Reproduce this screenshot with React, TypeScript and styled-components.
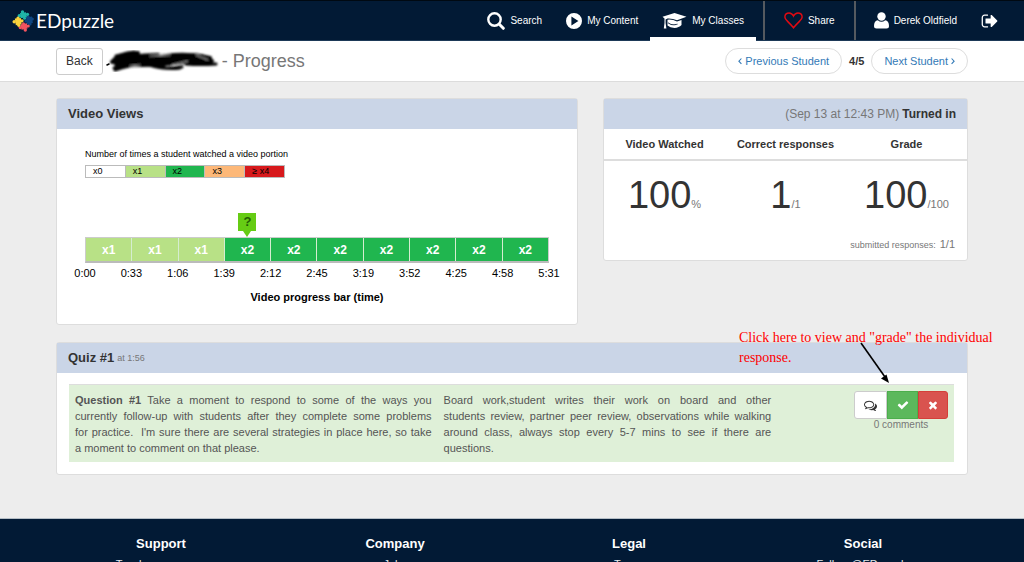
import React from 'react';
import styled, { createGlobalStyle, css } from 'styled-components';

const GlobalStyle = createGlobalStyle`
  * { box-sizing: border-box; }
  body {
    margin: 0;
    background: #ededed;
    color: #333;
    font-family: "Liberation Sans", Arial, sans-serif;
    font-size: 11px;
    line-height: 16px;
    overflow-x: hidden;
  }
  a { text-decoration: none; color: inherit; }
  button { font-family: inherit; margin: 0; cursor: pointer; }
  h1, h2, h3, p { margin: 0; }
`;

const Page = styled.div`
  height: 100vh;
  overflow: hidden;
`;

/* ---------- top bar ---------- */
const TopBar = styled.header`
  display: flex;
  align-items: stretch;
  justify-content: space-between;
  height: 41px;
  padding-left: 12px;
  background: #021a35;
  border-top: 1px solid #000912;
  border-bottom: 1px solid #1d3957;
`;

const Brand = styled.a`
  display: flex;
  align-items: center;
  gap: 2px;
  color: #fff;
  font-family: Lato, sans-serif;
  font-size: 19px;
  line-height: 20px;
`;

const Nav = styled.nav`
  display: flex;
  align-items: stretch;
`;

const NavItem = styled.a<{ $active?: boolean; $boxed?: boolean }>`
  display: flex;
  align-items: center;
  gap: 5px;
  padding: 0 12px;
  color: #fff;
  font-size: 10px;
  white-space: nowrap;
  ${(p) => p.$active && css`
    margin-right: 7px;
    box-shadow: inset 0 -3px #fff, 0 1px #fff;
  `}
  ${(p) => p.$boxed && css`
    padding: 0 19px;
    border: solid #555a60;
    border-width: 0 2px;
    margin-right: 6px;
  `}
`;

const LogOut = styled(NavItem)`
  padding: 0 25px 0 12px;
`;

/* ---------- sub header ---------- */
const SubHeader = styled.div`
  display: flex;
  align-items: center;
  justify-content: space-between;
  height: 41px;
  padding: 0 56px;
  background: #fff;
  border-bottom: 1px solid #dcdcdc;
`;

const Group = styled.div`
  display: flex;
  align-items: center;
`;

const BackButton = styled.button`
  height: 27px;
  padding: 0 9px;
  border: 1px solid #ccc;
  border-radius: 3px;
  background: #fff;
  color: #333;
  font-size: 12px;
`;

const Title = styled.h1`
  display: flex;
  align-items: center;
  gap: 2px;
  margin-left: 3px;
  color: #777;
  font-size: 18px;
  font-weight: 400;
  line-height: 24px;
`;

const PagerButton = styled.button`
  display: flex;
  align-items: center;
  gap: 3px;
  height: 26px;
  padding: 0 12px;
  border: 1px solid #ddd;
  border-radius: 13px;
  background: #fff;
  color: #337ab7;
  font-size: 11px;
`;

const PageCount = styled.strong`
  padding: 0 7px;
  font-size: 11px;
`;

/* ---------- panels ---------- */
const Content = styled.main`
  padding: 16px 56px 43px;
`;

const TopRow = styled.div`
  display: grid;
  grid-template-columns: 522fr 365fr;
  gap: 25px;
  align-items: start;
  margin-bottom: 17px;
`;

const Panel = styled.section`
  position: relative;
  background: #fff;
  border: 1px solid #ddd;
  border-radius: 3px;
`;

const PanelHead = styled.div<{ $right?: boolean }>`
  display: flex;
  align-items: center;
  justify-content: ${(p) => (p.$right ? 'flex-end' : 'flex-start')};
  gap: 3px;
  height: 30px;
  padding: 0 11px;
  background: #cad5e7;
  font-size: 12px;
  line-height: 18px;
`;

const PanelTitle = styled.h2`
  font-size: 13px;
`;

const Muted = styled.span<{ $size: number }>`
  color: #777;
  font-size: ${(p) => p.$size}px;
`;

/* ---------- video views ---------- */
const ChartBody = styled.div`
  padding: 17px 28px 19px;
  color: #000;
`;

const LegendTitle = styled.p`
  font-size: 9px;
`;

const Legend = styled.ul`
  display: flex;
  width: 200px;
  margin: 3px 0 35px;
  padding: 0;
  list-style: none;
  border: solid #bbb;
  border-width: 1px 0 1px 1px;
`;

const LegendItem = styled.li<{ $color: string }>`
  flex: 1;
  padding-left: 7px;
  border-right: 1px solid #bbb;
  background: ${(p) => p.$color};
  font-size: 9px;
  line-height: 11px;
`;

const MarkerRow = styled.div`
  display: grid;
  grid-template-columns: repeat(10, 1fr);
`;

const Marker = styled.div`
  grid-column: 4;
  justify-self: center;
  display: flex;
  flex-direction: column;
  align-items: center;
  color: #235c05;
  font-size: 13px;
  font-weight: 700;
  line-height: 18px;

  span { width: 18px; background: #66cc14; text-align: center; }
  &::after {
    content: "";
    border: solid transparent;
    border-width: 6px 4px 0;
    border-top-color: #66cc14;
  }
`;

const Bars = styled.div`
  display: flex;
  border: 1px solid #ccc;
  border-bottom: 2px solid #bbb;
`;

const Bar = styled.div<{ $color: string }>`
  flex: 1;
  padding-top: 1px;
  background: ${(p) => p.$color};
  color: #fff;
  font-size: 12px;
  font-weight: 700;
  line-height: 22px;
  text-align: center;
  & + & { border-left: 1px solid #d5edd0; }
`;

const Ticks = styled.div`
  display: grid;
  grid-template-columns: repeat(11, 1fr);
  margin: 2px -5% 8px;
  text-align: center;
`;

const AxisTitle = styled.h3`
  font-size: 11px;
  text-align: center;
`;

/* ---------- scores ---------- */
const Scores = styled.table`
  width: 100%;
  border-collapse: collapse;
  table-layout: fixed;
  text-align: center;

  th { height: 31px; padding: 0; border-bottom: 2px solid #ddd; font-size: 11px; }
  td { height: 70px; padding: 8px 0 0; font-size: 38px; line-height: 40px; white-space: nowrap; }
`;

const Submitted = styled.p`
  display: flex;
  justify-content: flex-end;
  align-items: baseline;
  gap: 4px;
  padding: 6px 12px 7px;
`;

/* ---------- quiz ---------- */
const Answer = styled.div`
  display: grid;
  grid-template-columns: 369fr 340fr 177fr;
  margin: 11px 13px 12px 12px;
  background: #dff0d8;
  border-top: 1px solid #ddd;
  color: #555;
`;

const Cell = styled.div`
  padding: 7px 6px 6px;
  text-align: justify;
`;

const Line = styled.span`
  display: block;
  white-space: pre-wrap;
  text-align-last: justify;
  &:last-child { text-align-last: left; }
`;

const Actions = styled.div`
  justify-self: end;
  padding: 6px;
  color: #777;
  font-size: 10px;
  line-height: 12px;
  text-align: center;
`;

const ButtonGroup = styled.div`
  display: flex;
`;

const tones = {
  plain: css`background: #fff; border-color: #ccc; color: #333; width: 33px; border-radius: 3px 0 0 3px;`,
  good: css`background: #5cb85c; border-color: #4cae4c; color: #fff; width: 31px;`,
  bad: css`background: #d9534f; border-color: #d43f3a; color: #fff; width: 30px; border-radius: 0 3px 3px 0;`,
};

const GradeButton = styled.button<{ $tone: keyof typeof tones }>`
  display: flex;
  align-items: center;
  justify-content: center;
  height: 28px;
  padding: 0;
  border: 1px solid;
  ${(p) => tones[p.$tone]}
`;

const Callout = styled.div`
  position: absolute;
  top: -15px;
  right: -36px;
  width: 264px;
  color: #f00;
  font-family: "Liberation Serif", "Times New Roman", serif;
  font-size: 14px;
  line-height: 20px;

  svg { position: absolute; left: 120px; top: 14px; }
`;

/* ---------- footer ---------- */
const Footer = styled.footer`
  display: grid;
  grid-template-columns: repeat(4, 1fr);
  padding: 17px 44px;
  background: #021a35;
  border-top: 1px solid #b5bec6;
  color: #e4e8ec;
  text-align: center;

  h3 { margin-bottom: 4px; color: #fff; font-size: 13px; }
  a { display: block; }
`;

/* ---------- icons ---------- */
const FontIcon = ({ d, size }: { d: string; size: number }) => (
  <svg width={size} height={size} viewBox="0 0 1792 1792" fill="currentColor" aria-hidden="true">
    <path d={d} />
  </svg>
);

const CHECK = 'M1671 566q0 40-28 68l-724 724-136 136q-28 28-68 28t-68-28l-136-136-362-362q-28-28-28-68t28-68l136-136q28-28 68-28t68 28l294 295 656-657q28-28 68-28t68 28l136 136q28 28 28 68z';
const TIMES = 'M1490 1322q0 40-28 68l-136 136q-28 28-68 28t-68-28l-294-294-294 294q-28 28-68 28t-68-28l-136-136q-28-28-28-68t28-68l294-294-294-294q-28-28-28-68t28-68l136-136q28-28 68-28t68 28l294 294 294-294q28-28 68-28t68 28l136 136q28 28 28 68t-28 68l-294 294 294 294q28 28 28 68z';
const COMMENTS = 'M704 384q-153 0-286 52t-211.5 141-78.5 191q0 82 53 158t149 132l97 56-35 84q34-20 62-39l44-31 53 10q78 14 153 14 153 0 286-52t211.5-141 78.5-191-78.5-191-211.5-141-286-52zm0-128q191 0 353.5 68.5t256.5 186.5 94 257-94 257-256.5 186.5-353.5 68.5q-86 0-176-16-124 88-278 128-36 9-86 16h-3q-11 0-20.5-8t-11.5-21q-1-3-1-6.5t.5-6.5 2-6l2.5-5 3.5-5.5 4-5 4.5-5 4-4.5q5-6 23-25t26-29.5 22.5-29 25-38.5 20.5-44q-124-72-195-177t-71-224q0-139 94-257t256.5-186.5 353.5-68.5zm822 1169q10 24 20.5 44t25 38.5 22.5 29 26 29.5 23 25q1 1 4 4.5t4.5 5 4 5 3.5 5.5l2.5 5 2 6 .5 6.5-1 6.5q-3 14-13 22t-22 7q-50-7-86-16-154-40-278-128-90 16-176 16-271 0-472-132 58 4 88 4 161 0 309-45t264-129q125-92 192-212t67-254q0-77-23-152 129 71 204 178t75 230q0 120-71 224.5t-195 176.5z';
const SIGN_OUT = 'M704 1440q0 4 1 20t.5 26.5-3 23.5-10 19.5-20.5 6.5h-320q-119 0-203.5-84.5t-84.5-203.5v-704q0-119 84.5-203.5t203.5-84.5h320q13 0 22.5 9.5t9.5 22.5q0 4 1 20t.5 26.5-3 23.5-10 19.5-20.5 6.5h-320q-66 0-113 47t-47 113v704q0 66 47 113t113 47h312l11.5 1 11.5 3 8 5.5 7 9 2 13.5zm928-544q0 26-19 45l-544 544q-19 19-45 19t-45-19-19-45v-288h-448q-26 0-45-19t-19-45v-384q0-26 19-45t45-19h448v-288q0-26 19-45t45-19 45 19l544 544q19 19 19 45z';

const LogoMark = () => (
  <svg width="22" height="22" viewBox="0 0 22 22" aria-hidden="true">
    <g fill="#0e4580">
      <path d="M14 7.500l6-1 .8 6.500-6 1.200z" />
      <circle cx="16" cy="7" r="1.700" />
      <circle cx="20.300" cy="9" r="1.600" />
      <circle cx="18" cy="14" r="1.600" />
      <circle cx="14" cy="11" r="1.600" />
    </g>
    <g fill="#1fb5a8">
      <path d="M8 3l6-.8.9 5-6.300 1z" />
      <circle cx="10.500" cy="2" r="1.700" />
      <circle cx="15.500" cy="4.300" r="1.600" />
      <circle cx="7.300" cy="5.800" r="1.700" />
      <circle cx="12.500" cy="8.300" r="1.500" />
    </g>
    <g fill="#f4535f">
      <path d="M8.500 14.500l6.300-1.200.8 5.200-6 1.200z" />
      <circle cx="11.500" cy="13.800" r="1.500" />
      <circle cx="16.200" cy="16" r="1.600" />
      <circle cx="8.200" cy="17.600" r="1.600" />
      <circle cx="13.300" cy="20" r="1.700" />
    </g>
    <g fill="#fbd23c">
      <path d="M2.800 8.500L8.800 8l.8 6.200-5.800 1z" />
      <circle cx="6" cy="8" r="1.600" />
      <circle cx="2.200" cy="11.800" r="1.700" />
      <circle cx="10" cy="10.800" r="1.600" />
      <circle cx="6.800" cy="15.300" r="1.600" />
    </g>
  </svg>
);

const SearchIcon = () => (
  <svg width="18" height="18" viewBox="0 0 18 18" fill="none" stroke="#fff" aria-hidden="true">
    <circle cx="7.500" cy="7.500" r="6.200" strokeWidth="2.400" />
    <path d="M12.300 12.300l4 4" strokeWidth="3" strokeLinecap="round" />
  </svg>
);

const PlayIcon = () => (
  <svg width="16" height="16" viewBox="0 0 16 16" aria-hidden="true">
    <path fillRule="evenodd" fill="#fff" d="M8 0a8 8 0 1 1 0 16A8 8 0 0 1 8 0zM5.400 3.600v8.800L12.400 8z" />
  </svg>
);

const CapIcon = () => (
  <svg width="25" height="18" viewBox="0 0 25 18" fill="#fff" aria-hidden="true">
    <path d="M12.500 1L24.500 4.800 15 8.300Q10.500 6.200 5.500 6.500L3.600 7.400V11l.8 5.500H1.800L2.500 11V6.400L.5 4.800z" />
    <path d="M5.500 7.700q5-.6 9.500 1.900l4.500-1.700v5.200q-2.500 2.800-7 2.800-4.500-.1-7-2.500z" />
    <path d="M6 10.800q3 2.400 6 2t3.500-.6" fill="none" stroke="#021a35" strokeWidth=".9" />
  </svg>
);

const HeartIcon = () => (
  <svg width="19" height="17" viewBox="0 0 19 17" fill="none" stroke="#e00a12" strokeWidth="1.500" aria-hidden="true">
    <path d="M9.500 15.800Q7.500 13.200 3.800 9.600C1 6.900.8 4.800.9 4.400 1.200 2.200 2.900.9 5 .9c2.300 0 3.700 1.400 4.500 3.100C10.300 2.300 11.700.9 14 .9c2.100 0 3.800 1.300 4.100 3.500.1.400-.1 2.500-2.900 5.200Q11.500 13.200 9.500 15.800z" />
  </svg>
);

const UserIcon = () => (
  <svg width="15" height="17" viewBox="0 0 15 17" fill="#fff" aria-hidden="true">
    <circle cx="7.500" cy="4.500" r="4.200" />
    <path d="M3.800 8.200Q7.500 11.200 11.200 8.200 15 8.800 15 14q0 2.500-2.500 2.500h-10Q0 16.500 0 14 0 8.800 3.800 8.200z" />
  </svg>
);

const Scribble = () => (
  <svg width="114" height="28" viewBox="0 0 114 28" fill="none" stroke="#000" strokeLinecap="round" strokeLinejoin="round" aria-label="Name hidden">
    <defs>
      <filter id="soft"><feGaussianBlur stdDeviation="0.9" /></filter>
    </defs>
    <g filter="url(#soft)">
      <path strokeWidth="4" d="M6 15Q14 5 32 6 18 9 8 15q16-7 44-7-24 2-42 9 22-5 50-8 22-3 44 2-26-2-46 2 24-2 48 1-24 0-48 3-22 2-42 0 22-4 56-5-30 6-50 4" />
      <path strokeWidth="3" d="M8 21q10-5 22-6M9 23q14-5 30-6M46 18q8 5 30 2M62 14q-6 5-4 6M74 9q22-3 30 3M80 17q14 1 30 0M10 9L28 5M40 17q18 6 34 4" />
      <path strokeWidth="1" stroke="#aaa" d="M44 9l20-1M66 18l16-4M90 8l12 5M24 19l10-1" />
    </g>
    <path strokeWidth="1.500" d="M1 18l2-1" />
  </svg>
);

const Chevron = ({ left }: { left?: boolean }) => (
  <svg width="4" height="8" viewBox="0 0 4 8" fill="none" stroke="currentColor" strokeWidth="1.100" aria-hidden="true">
    <path d={left ? 'M3.400 1.500L.9 4.200l2.500 2.700' : 'M.6 1.500l2.500 2.700L.6 6.900'} />
  </svg>
);

const GREEN = '#20b64f';
const LIGHT = '#b8e186';

const legend = [
  ['x0', '#fff'],
  ['x1', LIGHT],
  ['x2', GREEN],
  ['x3', '#fdb878'],
  ['≥ x4', '#d7191c'],
];
const views = [1, 1, 1, 2, 2, 2, 2, 2, 2, 2];
const ticks = ['0:00', '0:33', '1:06', '1:39', '2:12', '2:45', '3:19', '3:52', '4:25', '4:58', '5:31'];
const footer = [
  ['Support', 'Teacher resources'],
  ['Company', 'Jobs'],
  ['Legal', 'Terms'],
  ['Social', 'Follow @EDpuzzle'],
];

export default function App() {
  return (
    <Page>
      <GlobalStyle />
      <TopBar>
        <Brand href="#"><LogoMark />EDpuzzle</Brand>
        <Nav>
          <NavItem href="#"><SearchIcon />Search</NavItem>
          <NavItem href="#"><PlayIcon />My Content</NavItem>
          <NavItem href="#" $active><CapIcon />My Classes</NavItem>
          <NavItem href="#" $boxed><HeartIcon />Share</NavItem>
          <NavItem href="#"><UserIcon />Derek Oldfield</NavItem>
          <LogOut href="#" aria-label="Log out"><FontIcon d={SIGN_OUT} size={18} /></LogOut>
        </Nav>
      </TopBar>

      <SubHeader>
        <Group>
          <BackButton type="button">Back</BackButton>
          <Title><Scribble />- Progress</Title>
        </Group>
        <Group>
          <PagerButton type="button"><Chevron left />Previous Student</PagerButton>
          <PageCount>4/5</PageCount>
          <PagerButton type="button">Next Student<Chevron /></PagerButton>
        </Group>
      </SubHeader>

      <Content>
        <TopRow>
          <Panel>
            <PanelHead><PanelTitle>Video Views</PanelTitle></PanelHead>
            <ChartBody>
              <LegendTitle>Number of times a student watched a video portion</LegendTitle>
              <Legend>
                {legend.map(([label, color]) => (
                  <LegendItem key={label} $color={color}>{label}</LegendItem>
                ))}
              </Legend>
              <MarkerRow><Marker><span>?</span></Marker></MarkerRow>
              <Bars>
                {views.map((n, i) => (
                  <Bar key={i} $color={n === 1 ? LIGHT : GREEN}>x{n}</Bar>
                ))}
              </Bars>
              <Ticks>{ticks.map((t) => <span key={t}>{t}</span>)}</Ticks>
              <AxisTitle>Video progress bar (time)</AxisTitle>
            </ChartBody>
          </Panel>

          <Panel>
            <PanelHead $right>
              <Muted $size={12}>(Sep 13 at 12:43 PM)</Muted>
              <strong>Turned in</strong>
            </PanelHead>
            <Scores>
              <thead>
                <tr><th>Video Watched</th><th>Correct responses</th><th>Grade</th></tr>
              </thead>
              <tbody>
                <tr>
                  <td>100<Muted $size={11}>%</Muted></td>
                  <td>1<Muted $size={11}>/1</Muted></td>
                  <td>100<Muted $size={11}>/100</Muted></td>
                </tr>
              </tbody>
            </Scores>
            <Submitted>
              <Muted $size={9}>submitted responses:</Muted>
              <Muted $size={11}>1/1</Muted>
            </Submitted>
          </Panel>
        </TopRow>

        <Panel>
          <PanelHead>
            <PanelTitle>Quiz #1</PanelTitle>
            <Muted $size={9}>at 1:56</Muted>
          </PanelHead>
          <Answer>
            <Cell>
              <Line><strong>Question #1</strong> Take a moment to respond to some of the ways you</Line>
              <Line>currently follow-up with students after they complete some problems</Line>
              <Line>{"for practice.  I'm sure there are several strategies in place here, so take"}</Line>
              <Line>a moment to comment on that please.</Line>
            </Cell>
            <Cell>
              <Line>Board work,student writes their work on board and other</Line>
              <Line>students review, partner peer review, observations while walking</Line>
              <Line>around class, always stop every 5-7 mins to see if there are</Line>
              <Line>questions.</Line>
            </Cell>
            <Actions>
              <ButtonGroup>
                <GradeButton type="button" $tone="plain" aria-label="Comments"><FontIcon d={COMMENTS} size={13} /></GradeButton>
                <GradeButton type="button" $tone="good" aria-label="Mark correct"><FontIcon d={CHECK} size={12} /></GradeButton>
                <GradeButton type="button" $tone="bad" aria-label="Mark incorrect"><FontIcon d={TIMES} size={12} /></GradeButton>
              </ButtonGroup>
              0 comments
            </Actions>
          </Answer>
          <Callout>
            Click here to view and "grade" the individual response.
            <svg width="34" height="44" viewBox="0 0 34 44" aria-hidden="true">
              <path d="M2 1L26 35" stroke="#000" strokeWidth="1.600" />
              <path d="M30 41L22 36.500 27.500 32.500z" fill="#000" />
            </svg>
          </Callout>
        </Panel>
      </Content>

      <Footer>
        {footer.map(([title, link]) => (
          <div key={title}>
            <h3>{title}</h3>
            <a href="#">{link}</a>
          </div>
        ))}
      </Footer>
    </Page>
  );
}
